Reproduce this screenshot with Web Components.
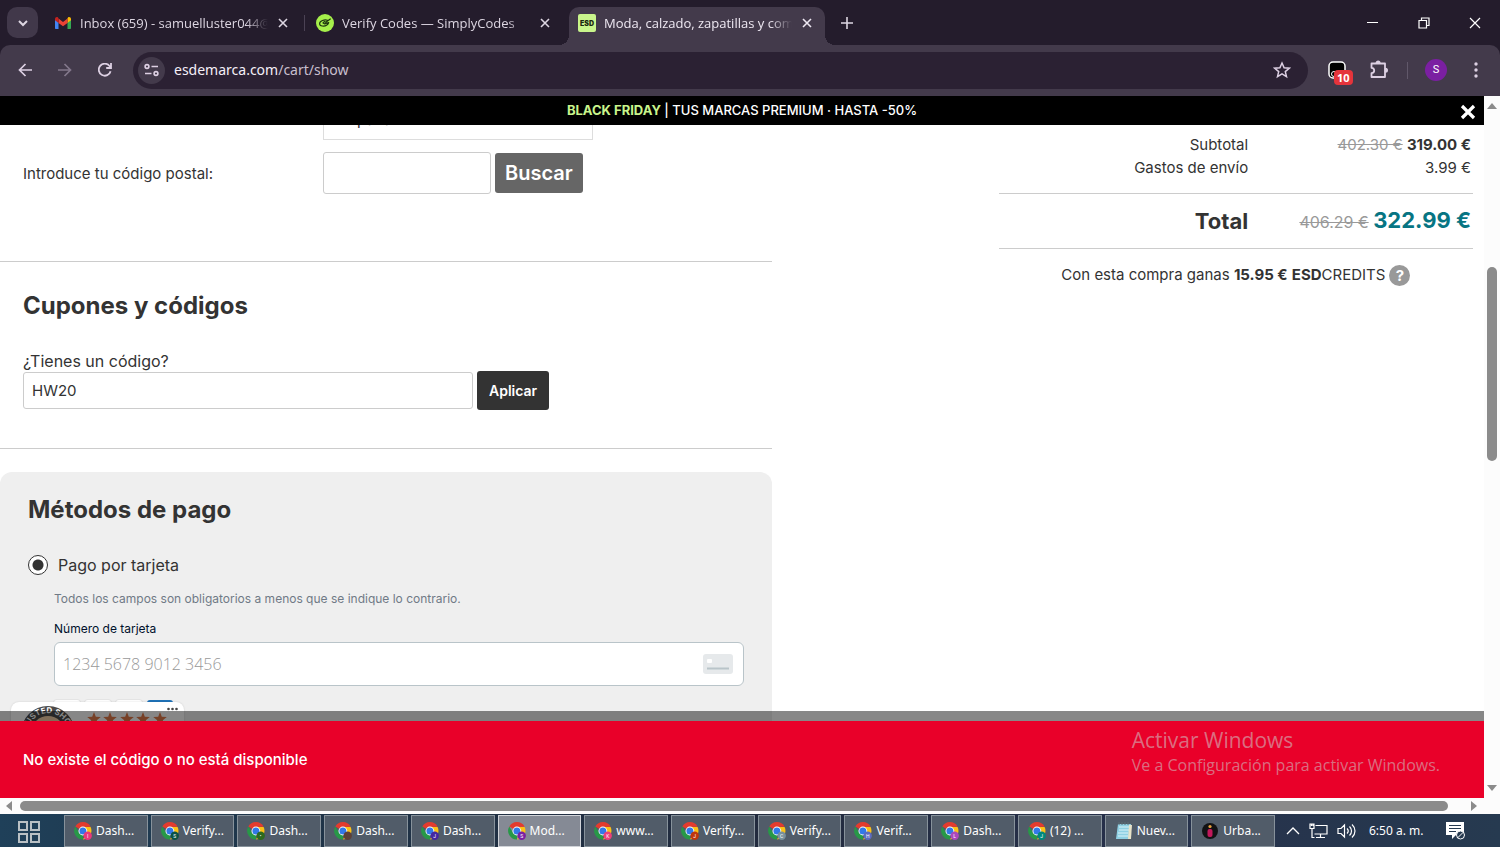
<!DOCTYPE html>
<html lang="es">
<head>
<meta charset="utf-8">
<meta name="viewport" content="width=device-width, initial-scale=1">
<title>Moda, calzado, zapatillas y complementos</title>
<style>
    html, body {
        height: 100%;
        margin: 0;
    }

    body {
        overflow: hidden;
        font-family: Inter, "Liberation Sans", sans-serif;
        color: #333;
    }
</style>
</head>
<body>
<desktop-screen>
    <tab-strip slot="browser">
        <browser-tab icon="gmail">Inbox (659) - samuelluster044@gmail.com</browser-tab>
        <browser-tab icon="simply">Verify Codes — SimplyCodes</browser-tab>
        <browser-tab icon="esd" active>Moda, calzado, zapatillas y complementos</browser-tab>
    </tab-strip>
    <browser-toolbar slot="browser" host="esdemarca.com" path="/cart/show"></browser-toolbar>

    <page-viewport>
        <promo-banner slot="over"><b slot="lead">BLACK FRIDAY</b>TUS MARCAS PREMIUM · HASTA -50%</promo-banner>
        <cart-page>
            <shipping-form></shipping-form>
            <coupon-form code="HW20"></coupon-form>
            <payment-methods></payment-methods>
            <order-summary slot="side"></order-summary>
        </cart-page>
        <trust-badge slot="over"></trust-badge>
        <error-toast slot="over">No existe el código o no está disponible</error-toast>
    </page-viewport>

    <windows-watermark slot="overlay"></windows-watermark>

    <task-bar slot="taskbar">
        <task-button badge="#e8397c" letter="I">Dash...</task-button>
        <task-button badge="#0b5345" letter="S">Verify...</task-button>
        <task-button badge="#2d6a1e" letter="•">Dash...</task-button>
        <task-button badge="#5d4037">Dash...</task-button>
        <task-button badge="#4527a0" letter="J">Dash...</task-button>
        <task-button badge="#7b1fa2" letter="S" active>Mod...</task-button>
        <task-button badge="#ec407a" letter="K">www...</task-button>
        <task-button badge="#bf360c" letter="J">Verify...</task-button>
        <task-button badge="#78909c" letter="C">Verify...</task-button>
        <task-button badge="#5c6bc0" letter="H">Verif...</task-button>
        <task-button badge="#ab47bc" letter="L">Dash...</task-button>
        <task-button badge="#00897b" letter="J">(12) ...</task-button>
        <task-button app="notepad">Nuev...</task-button>
        <task-button app="urban">Urba...</task-button>
    </task-bar>
</desktop-screen>

<script>
const UI_FONT = '"Noto Sans", "Open Sans", sans-serif'
const TITLE_FONT = '"Open Sans", "Noto Sans", sans-serif'

// favicons of the tabs
const FAVICONS = {
    gmail: `
        <svg width="18" height="18" viewBox="0 0 18 18">
            <path d="M1 5v9c0 .6.4 1 1 1h2.500V8.500z" fill="#4285f4"/>
            <path d="M17 5v9c0 .6-.4 1-1 1h-2.500V8.500z" fill="#34a853"/>
            <path d="M13.500 4.500v4.400L17 6.200V5c0-1.700-1.800-2.500-3-1.600z" fill="#fbbc04"/>
            <path d="M4.500 8.900V4.500L9 8l4.500-3.500v4.400L9 12.300z" fill="#ea4335"/>
            <path d="M1 5v1.200l3.500 2.700V4.500L4 3.400C2.800 2.500 1 3.300 1 5z" fill="#c5221f"/>
        </svg>`,
    simply: `
        <svg width="18" height="18" viewBox="0 0 18 18">
            <circle cx="9" cy="9" r="9" fill="#a6f04b"/>
            <path d="M11.500 6.200C8.500 5.200 3.600 6.900 3.600 9.700c0 2.700 4.800 3.100 7.300 1.200 1.500-1.100 1.800-2.400 1.800-2.400L8.800 9.900 7 8.900l1.300-1.300 1.500.7L14.300 5" fill="none" stroke="#1d3410" stroke-width="1.200" stroke-linejoin="round" stroke-linecap="round"/>
        </svg>`,
    esd: `
        <svg width="18" height="18" viewBox="0 0 18 18">
            <rect width="18" height="18" rx="2" fill="#c9f58c"/>
            <text x="9" y="12" text-anchor="middle" font-family="Inter, sans-serif" font-size="7" font-weight="900" fill="#1c2710">ESD</text>
        </svg>`
}

class DesktopScreen extends HTMLElement {
    constructor() {
        super()
        this.root = this.attachShadow({ mode: 'open' })
        this.root.innerHTML = `
            <style>
                :host {
                    display: flex;
                    flex-direction: column;
                    height: 100vh;
                    position: relative;
                    background: #241c2c;
                }
            </style>
            <slot name="browser"></slot>
            <slot></slot>
            <slot name="taskbar"></slot>
            <slot name="overlay"></slot>
        `
    }
}

class TabStrip extends HTMLElement {
    constructor() {
        super()
        this.root = this.attachShadow({ mode: 'open' })
        this.root.innerHTML = `
            <style>
                :host {
                    display: flex;
                    align-items: flex-start;
                    flex: none;
                    height: 38px;
                    padding: 7px 0 0 7px;
                    color: #ddd6e2;
                }

                button {
                    display: flex;
                    align-items: center;
                    justify-content: center;
                    padding: 0;
                    border: 0;
                    background: none;
                    color: inherit;
                }

                .search {
                    width: 31px;
                    height: 31px;
                    border-radius: 10px;
                    margin-right: 7px;
                    background: #41384a;
                }

                .tabs {
                    display: flex;
                    gap: 6px;
                    height: 38px;
                }

                .new {
                    width: 31px;
                    height: 31px;
                    margin-left: 6px;
                }

                .window {
                    display: flex;
                    margin-left: auto;
                }

                .window button {
                    width: 51px;
                    height: 31px;
                    color: #fff;
                }
            </style>
            <button class="search" aria-label="Buscar pestañas">
                <svg width="12" height="12" viewBox="0 0 12 12" fill="none" stroke="currentColor" stroke-width="2"><path d="M2 4l4 4 4-4"/></svg>
            </button>
            <div class="tabs"><slot></slot></div>
            <button class="new" aria-label="Nueva pestaña">
                <svg width="12" height="12" viewBox="0 0 12 12" stroke="currentColor" stroke-width="1.600"><path d="M6 0v12M0 6h12"/></svg>
            </button>
            <div class="window">
                <button aria-label="Minimizar"><svg width="12" height="12" viewBox="0 0 12 12" stroke="currentColor"><path d="M0 5.500h11"/></svg></button>
                <button aria-label="Restaurar"><svg width="12" height="12" viewBox="0 0 12 12" fill="none" stroke="currentColor" stroke-width="1.200"><path d="M1 3.500h7.500V11H1zM3.500 3.500V1H11v7.500H8.500"/></svg></button>
                <button aria-label="Cerrar"><svg width="12" height="12" viewBox="0 0 12 12" stroke="currentColor" stroke-width="1.200"><path d="M1 1l10 10M11 1L1 11"/></svg></button>
            </div>
        `
    }
}

class BrowserTab extends HTMLElement {
    constructor() {
        super()
        this.root = this.attachShadow({ mode: 'open' })
    }

    connectedCallback() {
        this.root.innerHTML = `
            <style>
                :host {
                    display: flex;
                    align-items: flex-start;
                    box-sizing: border-box;
                    position: relative;
                    width: 256px;
                    height: 38px;
                    padding: 0 9px;
                    font: 13px/32px ${TITLE_FONT};
                    color: #ddd6e2;
                }

                :host([active]) {
                    border-radius: 10px 10px 0 0;
                    background: #433a4b;
                    color: #eee8f2;
                }

                /* the feet of the active tab, which curve into the toolbar */
                :host([active])::before,
                :host([active])::after {
                    content: "";
                    position: absolute;
                    bottom: 0;
                    width: 10px;
                    height: 10px;
                }

                :host([active])::before {
                    right: 100%;
                    background: radial-gradient(circle at 0 0, transparent 10px, #433a4b 10px);
                }

                :host([active])::after {
                    left: 100%;
                    background: radial-gradient(circle at 100% 0, transparent 10px, #433a4b 10px);
                }

                :host([icon="gmail"])::after {
                    content: "";
                    position: absolute;
                    right: -4px;
                    top: 8px;
                    width: 1px;
                    height: 16px;
                    background: #4b4254;
                }

                svg {
                    flex: none;
                }

                .favicon {
                    display: flex;
                    height: 31px;
                    align-items: center;
                    margin-right: 8px;
                }

                .title {
                    flex: 1;
                    min-width: 0;
                    overflow: hidden;
                    white-space: nowrap;
                    -webkit-mask-image: linear-gradient(to right, #000 88%, transparent);
                    mask-image: linear-gradient(to right, #000 88%, transparent);
                }

                button {
                    display: flex;
                    align-items: center;
                    justify-content: flex-end;
                    width: 24px;
                    height: 31px;
                    padding: 0 4px 0 0;
                    border: 0;
                    background: none;
                    color: inherit;
                }
            </style>
            <span class="favicon">${FAVICONS[this.getAttribute('icon')]}</span>
            <span class="title"><slot></slot></span>
            <button aria-label="Cerrar pestaña">
                <svg width="10" height="10" viewBox="0 0 10 10" stroke="currentColor" stroke-width="1.600"><path d="M1 1l8 8M9 1L1 9"/></svg>
            </button>
        `
    }
}

class BrowserToolbar extends HTMLElement {
    constructor() {
        super()
        this.root = this.attachShadow({ mode: 'open' })
    }

    connectedCallback() {
        this.root.innerHTML = `
            <style>
                :host {
                    display: flex;
                    align-items: center;
                    flex: none;
                    box-sizing: border-box;
                    height: 51px;
                    padding: 0 4px 1px 5px;
                    border-radius: 10px 10px 0 0;
                    background: #433a4b;
                    color: #ddd0e3;
                }

                button {
                    display: flex;
                    align-items: center;
                    justify-content: center;
                    flex: none;
                    width: 40px;
                    height: 34px;
                    padding: 0;
                    border: 0;
                    background: none;
                    color: inherit;
                }

                button:disabled {
                    color: #83778b;
                }

                .omnibox {
                    display: flex;
                    align-items: center;
                    flex: 1;
                    height: 37px;
                    margin: 0 7px 0 8px;
                    padding: 0 6px 0 5px;
                    border-radius: 19px;
                    background: #2b2133;
                }

                .omnibox .site {
                    width: 27px;
                    height: 27px;
                    border-radius: 50%;
                    background: #433a4b;
                }

                .url {
                    flex: 1;
                    padding-left: 9px;
                    font: 14px/20px ${UI_FONT};
                    color: #c8bfce;
                }

                .url b {
                    font-weight: 400;
                    color: #f4eff7;
                }

                .extension {
                    position: relative;
                    width: 44px;
                }

                .count {
                    position: absolute;
                    left: 19px;
                    top: 17px;
                    padding: 0 3px;
                    border-radius: 4px;
                    background: #e5343b;
                    color: #fff;
                    font: bold 11px/15px "Open Sans", sans-serif;
                }

                .divider {
                    width: 1px;
                    height: 17px;
                    margin: 0 8px;
                    background: #61586a;
                }

                .avatar span {
                    width: 22px;
                    border-radius: 50%;
                    background: #7b1fa2;
                    color: #fff;
                    font: 11px/22px Roboto, sans-serif;
                }
            </style>
            <button aria-label="Atrás">
                <svg width="14" height="14" viewBox="0 0 14 14" fill="none" stroke="currentColor" stroke-width="1.700"><path d="M14 7H1.500M7.500 1L1.500 7l6 6"/></svg>
            </button>
            <button aria-label="Adelante" disabled>
                <svg width="14" height="14" viewBox="0 0 14 14" fill="none" stroke="currentColor" stroke-width="1.700"><path d="M0 7h12.500M6.500 1l6 6-6 6"/></svg>
            </button>
            <button aria-label="Volver a cargar">
                <svg width="14" height="14" viewBox="0 0 14 14" fill="none" stroke="currentColor" stroke-width="1.800"><path d="M12.600 8.200A6 6 0 1 1 11.500 3L13 4.700M13 0v5H8.200"/></svg>
            </button>
            <div class="omnibox">
                <button class="site" aria-label="Información del sitio">
                    <svg width="15" height="14" viewBox="0 0 15 14" fill="none" stroke="currentColor" stroke-width="1.600"><circle cx="3" cy="3.500" r="1.900"/><path d="M7.500 3.500H14M1 10.500h6.500"/><circle cx="12" cy="10.500" r="1.900"/></svg>
                </button>
                <span class="url"><b>${this.getAttribute('host')}</b>${this.getAttribute('path')}</span>
                <button aria-label="Añadir a marcadores">
                    <svg width="18" height="18" viewBox="0 0 18 18" fill="none" stroke="currentColor" stroke-width="1.500"><path d="M9 2l2.100 4.700 5.100.5-3.900 3.400 1.200 5L9 12.900l-4.500 2.700 1.200-5-3.900-3.400 5.100-.5z"/></svg>
                </button>
            </div>
            <button class="extension" aria-label="Extensión">
                <svg width="18" height="18" viewBox="0 0 18 18"><rect x="1" y="1" width="16" height="16" rx="4" fill="#000" stroke="#fff" stroke-width="1.500"/><circle cx="6" cy="13" r="2.500" fill="none" stroke="#fff"/></svg>
                <span class="count">10</span>
            </button>
            <button aria-label="Extensiones">
                <svg width="20" height="20" viewBox="0 0 20 20" fill="none" stroke="currentColor" stroke-width="1.800" stroke-linejoin="round"><path d="M2.500 3.500H16v13.500H2.500v-3.800c3.600-.4 3.600-5 0-5.400z"/><path d="M7.500 3a1.600 1.600 0 0 1 3.200 0zM16.500 8.600a1.600 1.600 0 0 1 0 3.200z" fill="currentColor"/></svg>
            </button>
            <span class="divider"></span>
            <button class="avatar" aria-label="Perfil"><span>S</span></button>
            <button aria-label="Menú">
                <svg width="4" height="16" viewBox="0 0 4 16" fill="currentColor"><circle cx="2" cy="2" r="1.700"/><circle cx="2" cy="8" r="1.700"/><circle cx="2" cy="14" r="1.700"/></svg>
            </button>
        `
    }
}

// the page, with its two scroll bars
class PageViewport extends HTMLElement {
    constructor() {
        super()
        this.root = this.attachShadow({ mode: 'open' })
        this.root.innerHTML = `
            <style>
                :host {
                    display: grid;
                    grid-template: minmax(0, 1fr) 16px / minmax(0, 1fr) 16px;
                    flex: 1;
                    min-height: 0;
                    background: #fcfcfc;
                }

                .page {
                    position: relative;
                    overflow: hidden;
                    background: #fff;
                }
            </style>
            <div class="page">
                <slot></slot>
                <slot name="over"></slot>
            </div>
            <scroll-bar before="151" thumb="194" after="317"></scroll-bar>
            <scroll-bar horizontal before="2" thumb="1429" after="17"></scroll-bar>
        `
    }
}

class ScrollBar extends HTMLElement {
    constructor() {
        super()
        this.root = this.attachShadow({ mode: 'open' })
    }

    connectedCallback() {
        this.root.innerHTML = `
            <style>
                :host {
                    display: flex;
                    flex-direction: column;
                    align-items: center;
                    padding: 7px 0;
                    gap: 7px;
                }

                :host([horizontal]) {
                    flex-direction: row;
                    padding: 0 5px 0 4px;
                    gap: 4px;
                }

                svg {
                    flex: none;
                    fill: #8b8b8b;
                }

                :host([horizontal]) svg {
                    transform: rotate(-90deg);
                }

                .thumb {
                    flex: ${this.getAttribute('thumb')} 1 0;
                    width: 10px;
                    border-radius: 5px;
                    background: #8b8b8b;
                }

                :host([horizontal]) .thumb {
                    width: auto;
                    height: 10px;
                }

                .track {
                    display: flex;
                    flex-direction: inherit;
                    align-items: center;
                    flex: 1;
                }

                .before {
                    flex: ${this.getAttribute('before')} 1 0;
                }

                .after {
                    flex: ${this.getAttribute('after')} 1 0;
                }
            </style>
            <svg width="10" height="6" viewBox="0 0 10 6"><path d="M5 0l5 6H0z"/></svg>
            <div class="track"><span class="before"></span><span class="thumb"></span><span class="after"></span></div>
            <svg width="10" height="6" viewBox="0 0 10 6"><path d="M0 0h10L5 6z"/></svg>
        `
    }
}

class PromoBanner extends HTMLElement {
    constructor() {
        super()
        this.root = this.attachShadow({ mode: 'open' })
        this.root.innerHTML = `
            <style>
                :host {
                    display: block;
                    position: absolute;
                    inset: 0 0 auto 0;
                    background: #000;
                    color: #fff;
                    font-size: 13px;
                    font-weight: 500;
                    line-height: 29px;
                    text-align: center;
                }

                ::slotted(b) {
                    color: #c9f58c;
                    font-weight: 700;
                }

                button {
                    display: flex;
                    position: absolute;
                    right: 8px;
                    top: 8px;
                    padding: 0;
                    border: 0;
                    background: none;
                    color: #fff;
                }
            </style>
            <slot name="lead"></slot> | <slot></slot>
            <button aria-label="Cerrar aviso">
                <svg width="16" height="16" viewBox="0 0 16 16" stroke="currentColor" stroke-width="3.200"><path d="M2 2l12 12M14 2L2 14"/></svg>
            </button>
        `
    }
}

class CartPage extends HTMLElement {
    constructor() {
        super()
        this.root = this.attachShadow({ mode: 'open' })
        this.root.innerHTML = `
            <style>
                :host {
                    display: flex;
                    justify-content: space-between;
                    padding-right: 11px;
                    font-size: 15px;
                }

                main {
                    flex: 0 0 52.4%;
                }

                aside {
                    flex: 0 0 32.2%;
                }
            </style>
            <main><slot></slot></main>
            <aside><slot name="side"></slot></aside>
        `
    }
}

class ShippingForm extends HTMLElement {
    constructor() {
        super()
        this.root = this.attachShadow({ mode: 'open' })
        this.root.innerHTML = `
            <style>
                :host {
                    display: grid;
                    grid-template-columns: 300px 1fr;
                    row-gap: 12px;
                    align-items: center;
                    padding: 2px 0 67px 23px;
                    border-bottom: 1px solid #ccc;
                }

                select, input {
                    box-sizing: border-box;
                    height: 42px;
                    border: 1px solid #ccc;
                    background: #fff;
                    font: inherit;
                    color: inherit;
                }

                select {
                    appearance: none;
                    width: 270px;
                    padding: 0 16px;
                    border-color: #ddd;
                }

                input {
                    width: 168px;
                    border-radius: 3px;
                }

                .country {
                    align-self: start;
                }

                .search {
                    display: flex;
                    align-items: center;
                    gap: 4px;
                }

                button {
                    height: 40px;
                    padding: 0 10px;
                    border: 0;
                    border-radius: 3px;
                    background: #666;
                    color: #fff;
                    font: 600 20px/24px Inter, sans-serif;
                }
            </style>
            <label class="country" for="country">País:</label>
            <div><select id="country"><option>España</option></select></div>
            <label for="postcode">Introduce tu código postal:</label>
            <div class="search">
                <input id="postcode" type="text">
                <button>Buscar</button>
            </div>
        `
    }
}

class CouponForm extends HTMLElement {
    constructor() {
        super()
        this.root = this.attachShadow({ mode: 'open' })
    }

    connectedCallback() {
        this.root.innerHTML = `
            <style>
                :host {
                    display: block;
                    padding: 29px 0 38px 23px;
                    border-bottom: 1px solid #ccc;
                }

                h2 {
                    margin: 0 0 30px;
                    font-size: 24px;
                    line-height: 30px;
                    font-weight: 700;
                }

                label {
                    display: block;
                    font-size: 16px;
                    line-height: 20px;
                }

                .row {
                    display: flex;
                    align-items: center;
                    gap: 4px;
                }

                input {
                    box-sizing: border-box;
                    width: 450px;
                    height: 37px;
                    padding: 0 8px;
                    border: 1px solid #ccc;
                    border-radius: 3px;
                    font: inherit;
                    color: inherit;
                }

                button {
                    height: 39px;
                    padding: 0 12px;
                    border: 0;
                    border-radius: 3px;
                    background: #333;
                    color: #fff;
                    font: 600 14px/20px Inter, sans-serif;
                }
            </style>
            <h2>Cupones y códigos</h2>
            <label for="code">¿Tienes un código?</label>
            <div class="row">
                <input id="code" type="text" value="${this.getAttribute('code')}">
                <button>Aplicar</button>
            </div>
        `
    }
}

class PaymentMethods extends HTMLElement {
    constructor() {
        super()
        this.root = this.attachShadow({ mode: 'open' })
        this.root.innerHTML = `
            <style>
                :host {
                    display: block;
                    margin-top: 23px;
                    padding: 23px 28px 80px;
                    border-radius: 12px;
                    background: #efefef;
                }

                h2 {
                    margin: 0 0 28px;
                    font-size: 24px;
                    line-height: 30px;
                    font-weight: 700;
                }

                .method {
                    display: flex;
                    align-items: center;
                    gap: 10px;
                    font-size: 16px;
                    line-height: 24px;
                }

                input[type="radio"] {
                    appearance: none;
                    box-sizing: border-box;
                    width: 20px;
                    height: 20px;
                    margin: 0;
                    border: 1px solid #333;
                    border-radius: 50%;
                    background: radial-gradient(circle, #333 5px, #fff 6px);
                }

                .card {
                    padding-left: 26px;
                }

                .note {
                    margin: 12px 0 10px;
                    font-size: 12px;
                    line-height: 20px;
                    color: #707a86;
                }

                .card label {
                    display: block;
                    font-size: 12px;
                    line-height: 20px;
                    color: #00112c;
                }

                .field {
                    display: flex;
                    align-items: center;
                    box-sizing: border-box;
                    height: 44px;
                    margin: 3px 0 14px;
                    padding: 0 10px 0 8px;
                    border: 1px solid #b9c4c9;
                    border-radius: 6px;
                    background: #fff;
                }

                .field input {
                    flex: 1;
                    padding: 0;
                    border: 0;
                    outline: 0;
                    background: none;
                    font: 300 16px/24px "Open Sans", sans-serif;
                }

                .field input::placeholder {
                    color: #999;
                }

                .brands {
                    display: flex;
                    gap: 5px;
                }

                .brands span {
                    width: 26px;
                    height: 16px;
                    border-radius: 3px;
                    background: #fff;
                    box-shadow: 0 0 0 1px #e4e4e4;
                }

                .brands .amex {
                    background: #1f72b8;
                    box-shadow: none;
                }
            </style>
            <h2>Métodos de pago</h2>
            <div class="method">
                <input id="card" type="radio" name="method" checked>
                <label for="card">Pago por tarjeta</label>
            </div>
            <div class="card">
                <p class="note">Todos los campos son obligatorios a menos que se indique lo contrario.</p>
                <label for="number">Número de tarjeta</label>
                <div class="field">
                    <input id="number" type="text" placeholder="1234 5678 9012 3456">
                    <svg width="30" height="20" viewBox="0 0 30 20"><rect width="30" height="20" rx="3" fill="#e6e9eb"/><rect x="4" y="5" width="5" height="4" rx="1" fill="#fff"/><path d="M4 14.500h22" stroke="#b9c4c9" stroke-width="2"/></svg>
                </div>
                <div class="brands"><span></span><span></span><span></span><span class="amex"></span></div>
            </div>
        `
    }
}

class OrderSummary extends HTMLElement {
    constructor() {
        super()
        this.root = this.attachShadow({ mode: 'open' })
        this.root.innerHTML = `
            <style>
                :host {
                    display: block;
                    padding-top: 37px;
                }

                table {
                    width: 100%;
                    border-collapse: collapse;
                    line-height: 23px;
                    text-align: right;
                }

                th, td {
                    padding: 0;
                    font-weight: 400;
                }

                th {
                    width: 52.6%;
                }

                td {
                    padding-right: 2px;
                }

                b {
                    font-weight: 700;
                }

                s {
                    color: #999;
                }

                .shipping th, .shipping td {
                    padding-bottom: 14px;
                }

                .total {
                    border: solid #ccc;
                    border-width: 1px 0;
                    line-height: 52px;
                }

                .total th, .total b {
                    font-size: 22px;
                    font-weight: 700;
                }

                .total td {
                    font-size: 16px;
                }

                .total b {
                    color: #077583;
                }

                p {
                    display: flex;
                    align-items: center;
                    justify-content: center;
                    gap: 4px;
                    margin: 14px 0 0;
                    line-height: 24px;
                }

                button {
                    width: 21px;
                    height: 21px;
                    padding: 0;
                    border: 0;
                    border-radius: 50%;
                    background: #999;
                    color: #fff;
                    font: 700 15px/21px Inter, sans-serif;
                }
            </style>
            <table>
                <tr><th scope="row">Subtotal</th><td><s>402.30 €</s> <b>319.00 €</b></td></tr>
                <tr class="shipping"><th scope="row">Gastos de envío</th><td>3.99 €</td></tr>
                <tr class="total"><th scope="row">Total</th><td><s>406.29 €</s> <b>322.99 €</b></td></tr>
            </table>
            <p><span>Con esta compra ganas <b>15.95 €</b> <b>ESD</b>CREDITS</span><button>?</button></p>
        `
    }
}

class TrustBadge extends HTMLElement {
    constructor() {
        super()
        this.root = this.attachShadow({ mode: 'open' })
        this.root.innerHTML = `
            <style>
                :host {
                    display: flex;
                    gap: 12px;
                    position: absolute;
                    left: 11px;
                    bottom: 35px;
                    box-sizing: border-box;
                    width: 173px;
                    height: 61px;
                    padding: 4px 6px 0 10px;
                    border-radius: 8px;
                    background: #fff;
                    box-shadow: 0 0 2px rgba(0, 0, 0, .15);
                }

                svg {
                    flex: none;
                }

                .stars {
                    margin-top: 5px;
                }

                .dots {
                    position: absolute;
                    right: 6px;
                    top: 4px;
                }
            </style>
            <svg width="54" height="54" viewBox="0 0 54 54">
                <defs><path id="arc" d="M7 27a20 20 0 0 1 40 0"/></defs>
                <circle cx="27" cy="27" r="27" fill="#4a4a4a"/>
                <circle cx="27" cy="27" r="17" fill="#f1cfa6"/>
                <text font-family="Inter, sans-serif" font-size="8" font-weight="700" fill="#fff"><textPath href="#arc" startOffset="50%" text-anchor="middle">TRUSTED SHOPS</textPath></text>
            </svg>
            <svg class="stars" width="80" height="16" viewBox="0 0 80 16" fill="#e07a4a">
                <path id="star" d="M7 1l1.800 4.800 5 .2-4 3.200 1.400 5L7 11.300l-4.200 2.900 1.400-5-4-3.200 5-.2z"/>
                <use href="#star" x="16"/><use href="#star" x="33"/><use href="#star" x="49"/><use href="#star" x="66"/>
            </svg>
            <svg class="dots" width="11" height="6" viewBox="0 0 11 6" fill="#444"><circle cx="1.500" cy="3" r="1.300"/><circle cx="5.500" cy="3" r="1.300"/><circle cx="9.500" cy="3" r="1.300"/></svg>
        `
    }
}

class ErrorToast extends HTMLElement {
    constructor() {
        super()
        this.root = this.attachShadow({ mode: 'open' })
        this.root.innerHTML = `
            <style>
                :host {
                    display: block;
                    position: absolute;
                    inset: auto 0 0 0;
                    padding: 0 23px;
                    border-top: 10px solid rgba(0, 0, 0, .47);
                    background: #e90029;
                    background-clip: padding-box;
                    color: #fff;
                    font-size: 15px;
                    font-weight: 500;
                    line-height: 77px;
                }
            </style>
            <slot></slot>
        `
    }
}

class WindowsWatermark extends HTMLElement {
    constructor() {
        super()
        this.root = this.attachShadow({ mode: 'open' })
        this.root.innerHTML = `
            <style>
                :host {
                    display: block;
                    position: absolute;
                    right: 60px;
                    bottom: 70px;
                    color: rgba(205, 205, 205, .55);
                    font: 16px/23px ${TITLE_FONT};
                    pointer-events: none;
                }

                .title {
                    font-size: 21px;
                    line-height: 27px;
                }
            </style>
            <div class="title">Activar Windows</div>
            <div>Ve a Configuración para activar Windows.</div>
        `
    }
}

class TaskBar extends HTMLElement {
    constructor() {
        super()
        this.root = this.attachShadow({ mode: 'open' })
        this.root.innerHTML = `
            <style>
                :host {
                    display: flex;
                    flex: none;
                    height: 33px;
                    background: linear-gradient(to right, #1f4059, #1f3448 20%, #222b3e 50%, #26304a 75%, #263a50);
                    color: #fff;
                }

                button {
                    display: flex;
                    align-items: center;
                    padding: 0;
                    border: 0;
                    background: none;
                    color: inherit;
                }

                .start {
                    width: 64px;
                    padding: 3px 0 0 17px;
                }

                nav {
                    display: flex;
                    gap: 3px;
                    flex: 1;
                    min-width: 0;
                    padding-top: 1px;
                }

                .tray {
                    display: flex;
                    align-items: center;
                    gap: 9px;
                    box-sizing: border-box;
                    width: 225px;
                    padding-left: 11px;
                }

                time {
                    margin: 0 14px 0 4px;
                    font: 12px/20px ${UI_FONT};
                }
            </style>
            <button class="start" aria-label="Inicio">
                <svg width="24" height="24" viewBox="0 0 24 24" fill="none" stroke="#b9c0c4" stroke-width="2"><path d="M2 2h8v8H2zM14 2h8v8h-8zM2 14h8v8H2zM14 14h8v8h-8z"/></svg>
            </button>
            <nav><slot></slot></nav>
            <div class="tray">
                <button aria-label="Iconos ocultos"><svg width="14" height="8" viewBox="0 0 14 8" fill="none" stroke="currentColor" stroke-width="1.300"><path d="M1 7l6-6 6 6"/></svg></button>
                <button aria-label="Red"><svg width="19" height="16" viewBox="0 0 19 16" fill="none" stroke="currentColor" stroke-width="1.200"><path d="M6.500 2.500h11.500v8.500H5.500M11.500 11v3.500M7 14.500h9M1 1h4v4.500H1zM3 5.500v9h2.500M2.500 1v2M4 1v2"/></svg></button>
                <button aria-label="Volumen"><svg width="19" height="16" viewBox="0 0 19 16" fill="none" stroke="currentColor" stroke-width="1.200"><path d="M1 5.500h3L7.500 2v12L4 10.500H1zM10 5.500c1.500 1.500 1.500 3.500 0 5M12.500 3.500c2.700 2.600 2.700 6.400 0 9M15 1.500c4 3.700 4 9.300 0 13"/></svg></button>
                <time>6:50 a. m.</time>
                <button aria-label="Notificaciones"><svg width="19" height="18" viewBox="0 0 19 18"><path d="M0 0h18v13H10l-4 4v-4H0z" fill="#fff"/><path d="M3 3.500h12M3 6.500h12M3 9.500h7" stroke="#263a50"/><circle cx="14.500" cy="13" r="4" fill="#263a50" stroke="#fff"/><path d="M11.700 15.800l5.600-5.600" stroke="#fff"/></svg></button>
            </div>
        `
    }
}

class TaskButton extends HTMLElement {
    constructor() {
        super()
        this.root = this.attachShadow({ mode: 'open' })
    }

    // browser windows carry the badge of their profile
    get icon() {
        const app = this.getAttribute('app')
        if (app === 'notepad') {
            return `<svg width="18" height="18" viewBox="0 0 18 18"><path d="M3 2h13l-1 15H1z" fill="#8fd0e3"/><path d="M4 5h10M4 8h10M3 11h10M3 14h10" stroke="#d9f3fa"/><path d="M14 3h3l-1 14h-3z" fill="#e8e3c9"/><path d="M4 0v3M7 0v3M10 0v3M13 0v3" stroke="#5d6f77"/></svg>`
        }
        if (app === 'urban') {
            return `<svg width="18" height="18" viewBox="0 0 18 18"><circle cx="9" cy="9" r="8" fill="#121214"/><rect x="6.500" y="7" width="5" height="8" rx="2" fill="#c2185b"/><circle cx="9" cy="4.500" r="1.600" fill="#e8a33d"/></svg>`
        }
        return `
            <svg width="18" height="18" viewBox="0 0 18 18">
                <path d="M9 9 1.300 4.600A8.700 8.700 0 0 1 16.600 4.700L9 5z" fill="#e33b2e"/>
                <path d="M9 5H16.600A8.700 8.700 0 0 1 9 17.500L12.500 11z" fill="#fbc116"/>
                <path d="M5.200 11 9 13l0 4.600A8.700 8.700 0 0 1 1.300 4.600z" fill="#279847"/>
                <circle cx="8.900" cy="9" r="4.400" fill="#fff"/><circle cx="8.900" cy="9" r="3.500" fill="#3279e8"/>
                <circle cx="13.700" cy="13.700" r="4.200" fill="${this.getAttribute('badge')}"/>
                <text x="13.700" y="15.500" text-anchor="middle" font-family="Roboto, sans-serif" font-size="5" fill="#fff">${this.getAttribute('letter') || ''}</text>
            </svg>`
    }

    connectedCallback() {
        this.root.innerHTML = `
            <style>
                :host {
                    display: flex;
                    flex: 1 1 0;
                    min-width: 0;
                }

                button {
                    display: flex;
                    align-items: center;
                    gap: 4px;
                    flex: 1;
                    min-width: 0;
                    padding: 0 0 0 9px;
                    border: 1px solid #87929b;
                    background: #515c69;
                    color: #fff;
                    font: 12px/20px ${UI_FONT};
                    white-space: nowrap;
                }

                :host([active]) button {
                    border-color: #d0d3d8;
                    background: #858a95;
                }

                svg {
                    flex: none;
                }
            </style>
            <button>${this.icon}<span><slot></slot></span></button>
        `
    }
}

customElements.define('desktop-screen', DesktopScreen)
customElements.define('tab-strip', TabStrip)
customElements.define('browser-tab', BrowserTab)
customElements.define('browser-toolbar', BrowserToolbar)
customElements.define('page-viewport', PageViewport)
customElements.define('scroll-bar', ScrollBar)
customElements.define('promo-banner', PromoBanner)
customElements.define('cart-page', CartPage)
customElements.define('shipping-form', ShippingForm)
customElements.define('coupon-form', CouponForm)
customElements.define('payment-methods', PaymentMethods)
customElements.define('order-summary', OrderSummary)
customElements.define('trust-badge', TrustBadge)
customElements.define('error-toast', ErrorToast)
customElements.define('windows-watermark', WindowsWatermark)
customElements.define('task-bar', TaskBar)
customElements.define('task-button', TaskButton)
</script>
</body>
</html>
